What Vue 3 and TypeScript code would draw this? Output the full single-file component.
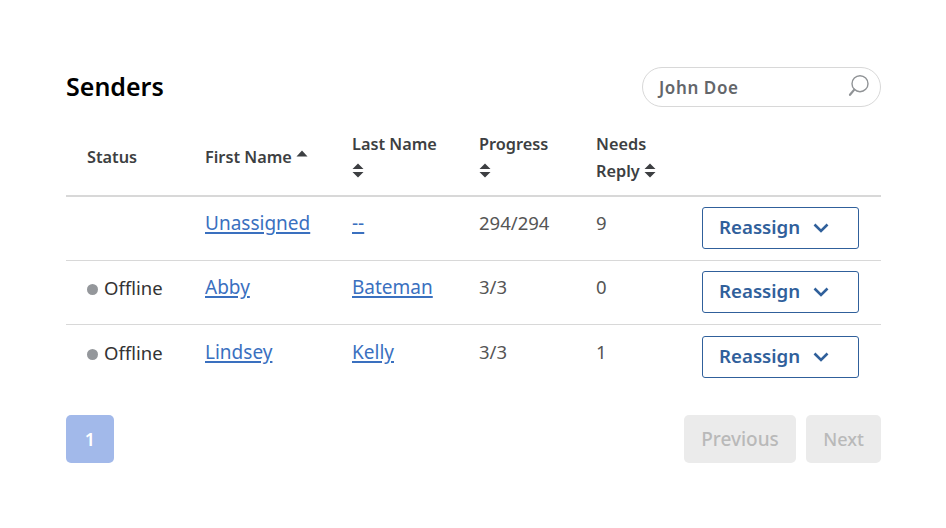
<script setup lang="ts">
interface Sender {
  status: string;
  first: string;
  last: string;
  progress: string;
  reply: number;
}

const senders: Sender[] = [
  { status: '', first: 'Unassigned', last: '--', progress: '294/294', reply: 9 },
  { status: 'Offline', first: 'Abby', last: 'Bateman', progress: '3/3', reply: 0 },
  { status: 'Offline', first: 'Lindsey', last: 'Kelly', progress: '3/3', reply: 1 },
];
</script>

<template>
  <div class="page">
    <div class="top">
      <h1 class="title">Senders</h1>
      <div class="search">
        <span class="search-text">John Doe</span>
        <svg class="search-icon" width="24" height="24" viewBox="0 0 24 24" fill="none" stroke="#909396">
          <circle cx="12" cy="8.7" r="8" stroke-width="1.4" />
          <path d="M6.3 14.6 2 19.8" stroke-width="2.2" stroke-linecap="round" />
        </svg>
      </div>
    </div>

    <table class="table">
      <colgroup>
        <col style="width: 118px" />
        <col style="width: 147px" />
        <col style="width: 127px" />
        <col style="width: 117px" />
        <col style="width: 106px" />
        <col style="width: 200px" />
      </colgroup>
      <thead>
        <tr>
          <th>Status</th>
          <th>
            First Name
            <svg class="caret-up" width="12" height="7" viewBox="0 0 12 7"><path d="M6 .5 11.5 6.5H.5Z" fill="#3d3f42" /></svg>
          </th>
          <th>
            Last Name<br />
            <svg class="sort" width="12" height="15" viewBox="0 0 12 15"><path d="M6 .5 11.5 6H.5ZM.5 9h11L6 14.5Z" fill="#3d3f42" /></svg>
          </th>
          <th>
            Progress<br />
            <svg class="sort" width="12" height="15" viewBox="0 0 12 15"><path d="M6 .5 11.5 6H.5ZM.5 9h11L6 14.5Z" fill="#3d3f42" /></svg>
          </th>
          <th>
            Needs<br />Reply
            <svg class="sort" width="12" height="15" viewBox="0 0 12 15"><path d="M6 .5 11.5 6H.5ZM.5 9h11L6 14.5Z" fill="#3d3f42" /></svg>
          </th>
          <th></th>
        </tr>
      </thead>
      <tbody>
        <tr v-for="s in senders" :key="s.first">
          <td>
            <span v-if="s.status" class="status"><i class="dot"></i>{{ s.status }}</span>
          </td>
          <td><a class="link" href="#">{{ s.first }}</a></td>
          <td><a class="link" href="#">{{ s.last }}</a></td>
          <td class="muted">{{ s.progress }}</td>
          <td class="muted">{{ s.reply }}</td>
          <td class="action">
            <button class="reassign" type="button">
              Reassign
              <svg width="16" height="10" viewBox="0 0 16 10" fill="none"><path d="M1.5 1.5 8 8 14.5 1.5" stroke="#30609b" stroke-width="2.6" /></svg>
            </button>
          </td>
        </tr>
      </tbody>
    </table>

    <div class="pager">
      <button class="page-num" type="button">1</button>
      <div class="pager-right">
        <button class="page-btn prev" type="button">Previous</button>
        <button class="page-btn next" type="button">Next</button>
      </div>
    </div>
  </div>
</template>

<style>
html, body {
  background: #fff;
}
</style>

<style scoped>
.page {
  width: 815px;
  height: 528px;
  box-sizing: border-box;
  margin-left: 66px;
  padding-top: 67px;
  font-family: "Noto Sans", "Liberation Sans", sans-serif;
  overflow: hidden;
}
.top {
  display: flex;
  justify-content: space-between;
  align-items: center;
  height: 40px;
}
.title {
  margin: 0;
  padding-bottom: 2px;
  font-size: 25px;
  font-weight: 600;
  color: #000;
}
.search {
  width: 239px;
  height: 40px;
  box-sizing: border-box;
  border: 1px solid #d8d8d8;
  border-radius: 20px;
  display: flex;
  align-items: center;
  justify-content: space-between;
  padding: 0 8px 0 16px;
}
.search-text {
  font-size: 17px;
  font-weight: 600;
  letter-spacing: 0.6px;
  color: #63666a;
}
.table {
  width: 815px;
  table-layout: fixed;
  border-collapse: collapse;
  margin-top: 21px;
}
th {
  height: 59px;
  padding: 0 0 8px 21px;
  text-align: left;
  font-size: 16.3px;
  line-height: 27px;
  font-weight: 600;
  color: #3d3f42;
  border-bottom: 2px solid #d8d8d8;
}
td {
  height: 49px;
  padding: 14px 0 0 21px;
  vertical-align: top;
  font-size: 18.5px;
  line-height: 24px;
  color: #555;
  border-bottom: 1px solid #d8d8d8;
}
td.action {
  height: 53px;
  padding-top: 10px;
}
tbody tr:last-child td {
  padding-top: 15px;
  border-bottom: none;
}
tbody tr:last-child td.action {
  padding-top: 11px;
}
.caret-up {
  vertical-align: 6px;
}
.sort {
  vertical-align: -1px;
}
.status {
  display: flex;
  align-items: center;
  gap: 6px;
  margin-top: 1px;
  color: #333;
}
.dot {
  width: 11px;
  height: 11px;
  margin-top: 2px;
  border-radius: 50%;
  background: #94979b;
}
.link {
  font-size: 19px;
  color: #3a70bf;
  text-decoration: underline;
  text-decoration-thickness: 2px;
  text-underline-offset: 2px;
}
.reassign {
  width: 157px;
  height: 42px;
  box-sizing: border-box;
  border: 1px solid #30609b;
  border-radius: 3px;
  background: #fff;
  color: #30609b;
  font-family: inherit;
  font-size: 18.7px;
  font-weight: 600;
  display: flex;
  align-items: center;
  gap: 13px;
  padding: 0 0 4px 16px;
}
.reassign svg {
  margin-top: 4px;
}
.pager {
  display: flex;
  justify-content: space-between;
  margin-top: 26px;
}
.pager-right {
  display: flex;
  gap: 10px;
}
button {
  cursor: pointer;
}
.page-num {
  width: 48px;
  height: 48px;
  border: none;
  border-radius: 5px;
  background: #a2b9ea;
  color: #fff;
  font-family: inherit;
  font-size: 18px;
  font-weight: 600;
}
.page-btn {
  height: 48px;
  border: none;
  border-radius: 5px;
  background: #ebebeb;
  color: #b9b9b9;
  font-family: inherit;
  font-size: 19px;
  font-weight: 500;
}
.prev {
  width: 112px;
}
.next {
  width: 75px;
  font-size: 18px;
}
</style>
